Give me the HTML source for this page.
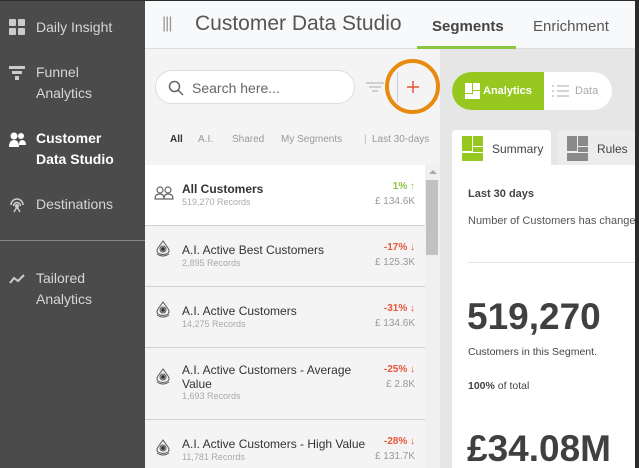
<!DOCTYPE html>
<html style="overflow:hidden;background:#f4f4f4"><head><meta charset="utf-8">
<style>
*{margin:0;padding:0;box-sizing:border-box}
body{width:639px;height:468px;overflow:hidden;background:#2b2b2b;font-family:"Liberation Sans",sans-serif;position:relative}
.a{position:absolute}
.side{left:0;top:1px;width:145px;height:467px;background:#4b4b4b}
.si{position:absolute;left:36px;color:#d6d6d6;font-size:14px;line-height:21px}
.hdr{left:145px;top:1px;width:490px;height:48px;background:#f8f9fa;border-bottom:1px solid #ddd}
.left{left:145px;top:49px;width:295px;height:419px;background:#f4f4f4}
.right{left:440px;top:49px;width:195px;height:419px;background:#e6e6e6}
.row{position:absolute;left:145px;width:280px;border-bottom:1px solid #cfcfcf;background:#f4f4f4}
.nm{position:absolute;left:37px;font-size:12px;color:#333;line-height:14px}
.rc{position:absolute;left:37px;font-size:9px;color:#aaa}
.pc{position:absolute;right:10px;font-size:10px;font-weight:bold;color:#e8553a}
.mv{position:absolute;right:10px;font-size:10px;color:#999}
.tb{position:absolute;top:134px;font-size:10px;color:#999}
</style></head><body>
<div class="a side">
  <svg class="a" style="left:9px;top:18px" width="16" height="16"><rect x="0" y="0" width="7" height="7" rx="1" fill="#ccc"/><rect x="9" y="0" width="7" height="7" rx="1" fill="#ccc"/><rect x="0" y="9" width="7" height="7" rx="1" fill="#ccc"/><rect x="9" y="9" width="7" height="7" rx="1" fill="#ccc"/></svg>
  <div class="si" style="top:16px">Daily Insight</div>
  <svg class="a" style="left:9px;top:65px" width="16" height="16"><rect x="0" y="0" width="16" height="3" fill="#ccc"/><rect x="3" y="5" width="10" height="3" fill="#ccc"/><rect x="6" y="10" width="4" height="4" fill="#ccc"/></svg>
  <div class="si" style="top:61px">Funnel<br>Analytics</div>
  <svg class="a" style="left:9px;top:131px" width="18" height="16"><circle cx="5" cy="4" r="3.5" fill="#fff"/><circle cx="12" cy="4" r="3" fill="#fff"/><path d="M0 15 Q0 8 5 8 Q10 8 10 15Z" fill="#fff"/><path d="M10 13 Q10 8 13 8 Q17 8 17 13Z" fill="#fff"/></svg>
  <div class="si" style="top:127px;color:#fff;font-weight:bold">Customer<br>Data Studio</div>
  <svg class="a" style="left:9px;top:196px" width="16" height="16" fill="none" stroke="#ccc" stroke-width="1.5"><path d="M2 8 A6 6 0 0 1 14 8"/><path d="M4.5 9 A3.5 3.5 0 0 1 11.5 9"/><circle cx="8" cy="9" r="1.3" fill="#ccc"/><path d="M8 10 L5 15 M8 10 L11 15"/></svg>
  <div class="si" style="top:193px">Destinations</div>
  <div class="a" style="left:0;top:239px;width:145px;height:1px;background:#888"></div>
  <svg class="a" style="left:9px;top:272px" width="16" height="12" fill="none" stroke="#ccc" stroke-width="2"><path d="M1 10 L5 5 L9 8 L15 2"/></svg>
  <div class="si" style="top:267px">Tailored<br>Analytics</div>
</div>
<div class="a hdr">
  <div class="a" style="left:17px;top:14px;color:#999;font-size:16px;letter-spacing:-1px">|||</div>
  <div class="a" style="left:50px;top:11px;color:#555;font-size:21px">Customer Data Studio</div>
  <div class="a" style="left:287px;top:17px;color:#444;font-size:15px;font-weight:bold">Segments</div>
  <div class="a" style="left:272px;top:45px;width:99px;height:4px;background:#8cc63f"></div>
  <div class="a" style="left:388px;top:17px;color:#555;font-size:15px">Enrichment</div>
</div>
<div class="a left"></div>
<div class="a right"></div>
<div class="a" style="left:155px;top:70px;width:200px;height:34px;background:#fff;border:1px solid #ddd;border-radius:17px"></div>
<svg class="a" style="left:168px;top:80px" width="16" height="16" fill="none" stroke="#666" stroke-width="1.5"><circle cx="6.5" cy="6.5" r="5"/><path d="M10 10 L15 15"/></svg>
<div class="a" style="left:192px;top:80px;font-size:14px;color:#666">Search here...</div>
<svg class="a" style="left:366px;top:82px" width="18" height="12" stroke="#aaa" stroke-width="1"><path d="M0 1H18M3 5H15M6 9H12"/></svg>
<div class="a" style="left:397px;top:72px;width:1px;height:30px;background:#ccc"></div>
<div class="a" style="left:385px;top:59px;width:55px;height:55px;border:4px solid #e88a0e;border-radius:50%"></div>
<svg class="a" style="left:406px;top:80px" width="14" height="14" stroke="#e8553a" stroke-width="1.5"><path d="M7 1V13M1 7H13"/></svg>
<div class="tb" style="left:170px;color:#333;font-weight:bold">All</div>
<div class="tb" style="left:198px">A.I.</div>
<div class="tb" style="left:232px">Shared</div>
<div class="tb" style="left:281px">My Segments</div>
<div class="tb" style="left:364px;color:#bbb">|</div>
<div class="tb" style="left:372px">Last 30-days</div>

<div class="row" style="top:165px;height:61px;background:#fff">
  <svg class="a" style="left:9px;top:21px" width="20" height="14" fill="none" stroke="#666" stroke-width="1.2"><circle cx="6" cy="4" r="3"/><circle cx="14" cy="4" r="3"/><path d="M1 13 Q1 8 6 8 Q10 8 10 13Z M10 13 Q10 8 14 8 Q19 8 19 13Z"/></svg>
  <div class="nm" style="top:17px;font-weight:bold">All Customers</div>
  <div class="rc" style="top:32px">519,270 Records</div>
  <div class="pc" style="top:16px;color:#8cc63f">1% ↑</div>
  <div class="mv" style="top:31px">£ 134.6K</div>
</div>
<div class="row" style="top:226px;height:61px">
  <div class="nm" style="top:17px">A.I. Active Best Customers</div>
  <div class="rc" style="top:32px">2,895 Records</div>
  <div class="pc" style="top:16px">-17% ↓</div><div class="mv" style="top:31px">£ 125.3K</div>
</div>
<div class="row" style="top:287px;height:61px">
  <div class="nm" style="top:17px">A.I. Active Customers</div>
  <div class="rc" style="top:32px">14,275 Records</div>
  <div class="pc" style="top:16px">-31% ↓</div><div class="mv" style="top:31px">£ 134.6K</div>
</div>
<div class="row" style="top:348px;height:72px">
  <div class="nm" style="top:15px">A.I. Active Customers - Average<br>Value</div>
  <div class="rc" style="top:43px">1,693 Records</div>
  <div class="pc" style="top:16px">-25% ↓</div><div class="mv" style="top:31px">£ 2.8K</div>
</div>
<div class="row" style="top:420px;height:48px;border:none">
  <div class="nm" style="top:17px">A.I. Active Customers - High Value</div>
  <div class="rc" style="top:32px">11,781 Records</div>
  <div class="pc" style="top:16px">-28% ↓</div><div class="mv" style="top:31px">£ 131.7K</div>
</div>
<svg class="a" style="left:155px;top:240px" width="16" height="228">
  <g id="ic" fill="none" stroke="#555" stroke-width="1"><path d="M8 1 L3 8 Q1 11 3 13 Q8 16 13 13 Q15 11 13 8Z" fill="#f4f4f4"/><circle cx="8" cy="9" r="3" fill="#fff"/><circle cx="8" cy="9" r="1.7" fill="#333"/><path d="M2 14 Q8 18 14 14"/></g>
  <use href="#ic" y="61"/><use href="#ic" y="128"/><use href="#ic" y="199"/>
</svg>
<div class="a" style="left:425px;top:165px;width:15px;height:303px;background:#f0f0f0"></div>
<div class="a" style="left:429px;top:170px;width:0;height:0;border-left:4px solid transparent;border-right:4px solid transparent;border-bottom:4px solid #aaa"></div>
<div class="a" style="left:426px;top:180px;width:12px;height:75px;background:#c1c1c1"></div>

<div class="a" style="left:452px;top:72px;width:160px;height:38px;background:#fff;border-radius:19px;overflow:hidden">
  <div class="a" style="left:0;top:0;width:92px;height:38px;background:#97c81f;border-radius:19px 0 0 19px"></div>
  <svg class="a" style="left:13px;top:11px" width="15" height="16" fill="#fff"><rect x="0" y="0" width="7" height="10"/><rect x="8" y="0" width="7" height="7"/><rect x="8" y="8" width="7" height="3"/><rect x="0" y="11" width="15" height="5"/></svg>
  <div class="a" style="left:31px;top:13px;font-size:11px;color:#fff;font-weight:bold">Analytics</div>
  <svg class="a" style="left:100px;top:13px" width="18" height="12" stroke="#aaa" stroke-width="1"><path d="M0 1H2M0 6H2M0 11H2M5 1H17M5 6H17M5 11H17"/></svg>
  <div class="a" style="left:123px;top:13px;font-size:11px;color:#aaa">Data</div>
</div>
<div class="a" style="left:452px;top:130px;width:99px;height:36px;background:#fff;border-radius:4px 4px 0 0"></div>
<svg class="a" style="left:462px;top:136px" width="21" height="25" fill="#97c81f"><rect x="0" y="0" width="10" height="15"/><rect x="11" y="0" width="10" height="10"/><rect x="11" y="11" width="10" height="5"/><rect x="0" y="17" width="21" height="8"/></svg>
<div class="a" style="left:492px;top:142px;font-size:12px;color:#444">Summary</div>
<div class="a" style="left:557px;top:130px;width:78px;height:36px;background:#ececec;border-radius:4px 4px 0 0"></div>
<svg class="a" style="left:567px;top:136px" width="21" height="25" fill="#8a8a8a"><rect x="0" y="0" width="10" height="15"/><rect x="11" y="0" width="10" height="10"/><rect x="11" y="11" width="10" height="5"/><rect x="0" y="17" width="21" height="8"/></svg>
<div class="a" style="left:597px;top:142px;font-size:12px;color:#444">Rules</div>
<div class="a" style="left:452px;top:165px;width:183px;height:303px;background:#fff"></div>
<div class="a" style="left:468px;top:188px;font-size:11px;color:#444;font-weight:bold">Last 30 days</div>
<div class="a" style="left:468px;top:215px;font-size:11px;color:#555;white-space:nowrap;width:167px;overflow:hidden">Number of Customers has changed</div>
<div class="a" style="left:468px;top:262px;width:167px;height:1px;background:#e5e5e5"></div>
<div class="a" style="left:467px;top:296px;font-size:37px;color:#404040;font-weight:bold">519,270</div>
<div class="a" style="left:468px;top:346px;font-size:10.5px;color:#444">Customers in this Segment.</div>
<div class="a" style="left:468px;top:380px;font-size:10.5px;color:#444"><b>100%</b> of total</div>
<div class="a" style="left:467px;top:428px;font-size:37px;color:#404040;font-weight:bold">£34.08M</div>
</body></html>
